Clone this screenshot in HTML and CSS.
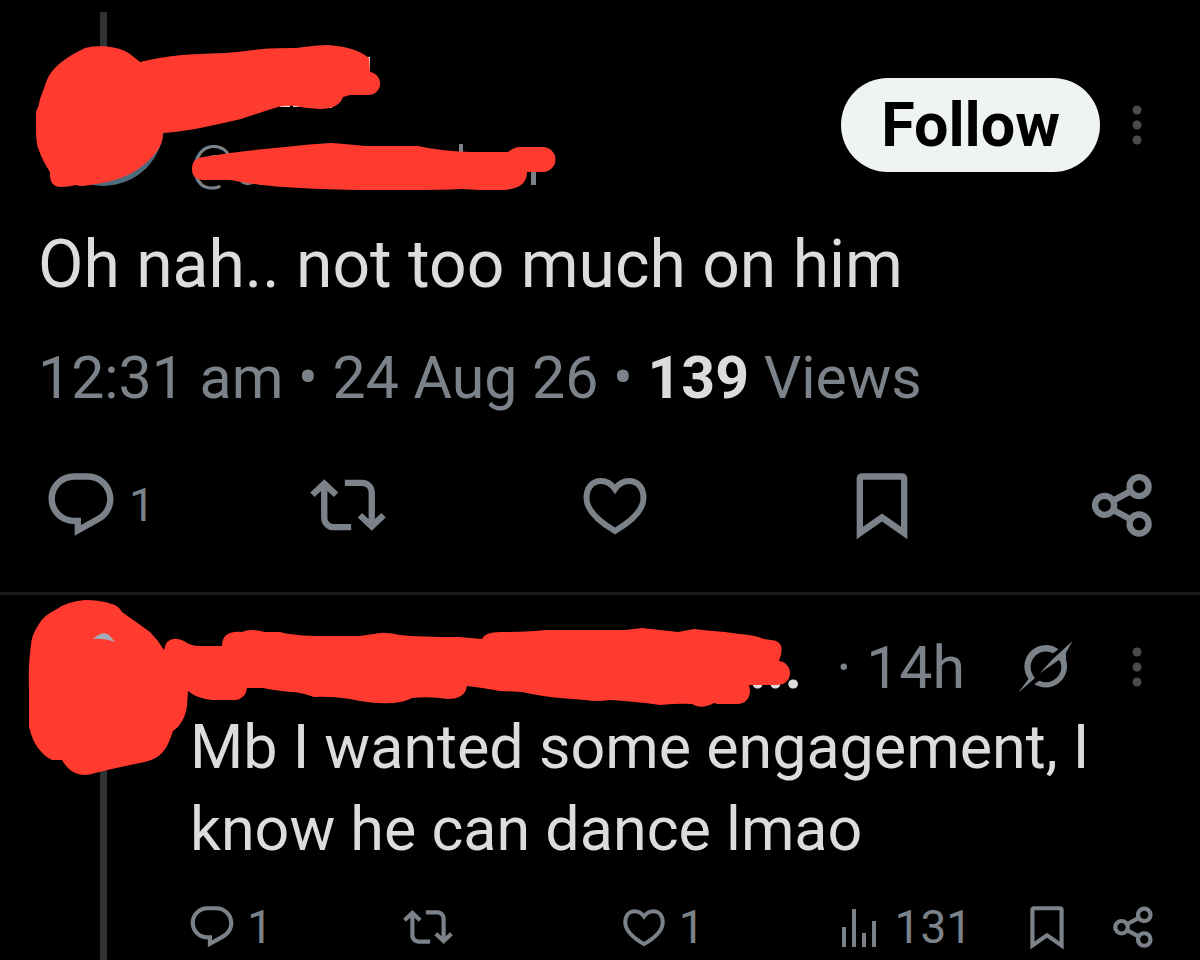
FILE: index.html
```html
<!DOCTYPE html>
<html lang="en">

<head>
    <meta charset="UTF-8">
    <meta name="viewport" content="width=device-width, initial-scale=1.0">
    <title>Post</title>
    <link rel="stylesheet" href="styles.css">
</head>

<body>

    <!-- shared icons -->
    <svg class="sprite" aria-hidden="true">
        <symbol id="reply" viewBox="0 0 24 24">
            <path d="M1.751 10c0-4.42 3.584-8 8.005-8h4.366c4.49 0 8.129 3.64 8.129 8.13 0 2.96-1.607 5.68-4.196 7.11l-8.054 4.46v-3.69h-.067c-4.49.1-8.183-3.51-8.183-8.01zm8.005-6c-3.317 0-6.005 2.69-6.005 6 0 3.37 2.77 6.08 6.138 6.01l.351-.01h1.761v2.3l5.087-2.81c1.951-1.08 3.163-3.13 3.163-5.36 0-3.39-2.744-6.13-6.129-6.13H9.756z"/>
        </symbol>
        <symbol id="repost" viewBox="0 0 24 24">
            <path d="M4.5 3.88l4.432 4.14-1.364 1.46L5.5 7.55V16c0 1.1.896 2 2 2H13v2H7.5c-2.209 0-4-1.79-4-4V7.55L1.432 9.48.068 8.02 4.5 3.88zM16.5 6H11V4h5.5c2.209 0 4 1.79 4 4v8.45l2.068-1.93 1.364 1.46-4.432 4.14-4.432-4.14 1.364-1.46 2.068 1.93V8c0-1.1-.896-2-2-2z"/>
        </symbol>
        <symbol id="like" viewBox="0 0 76 76">
            <path fill="none" stroke="currentColor" stroke-width="6" d="M38 22C33 15 28 14 24 14C15 14 9.500 21 9.500 31C9.500 43 21 54 38 64C55 54 66.500 43 66.500 31C66.500 21 61 14 52 14C48 14 43 15 38 22z"/>
        </symbol>
        <symbol id="bookmark" viewBox="0 0 24 24">
            <path d="M4 3.700C4 2.700 4.700 2 5.700 2h12.600C19.300 2 20 2.700 20 3.700v19.100l-8-5.600-8 5.600V3.700zM6 4v14.900l6-4.200 6 4.200V4H6z"/>
        </symbol>
        <symbol id="share" viewBox="0 0 24 24">
            <g fill="none" stroke="currentColor" stroke-width="2">
                <circle cx="17.400" cy="6.200" r="3"/>
                <circle cx="6.500" cy="12.100" r="3"/>
                <circle cx="17.400" cy="18" r="3"/>
                <path d="M9.100 10.700L14.800 7.600M9.100 13.500L14.800 16.600"/>
            </g>
        </symbol>
        <symbol id="views" viewBox="0 0 50 50">
            <path d="M7 25h4v20H7zM17 7h4v38h-4zM27 31h4v14h-4zM37 19h4v26h-4z"/>
        </symbol>
        <symbol id="more" viewBox="0 0 12 42">
            <circle cx="6" cy="6" r="4.500"/>
            <circle cx="6" cy="21" r="4.500"/>
            <circle cx="6" cy="36" r="4.500"/>
        </symbol>
        <symbol id="grok" viewBox="594 60 170 162">
            <path d="M718 88A64 64 0 0 0 628 177L597 218L647 175L645 170A46 46 0 0 1 702 100z"/>
            <path d="M760 63L700 118L662 160L719 120L724 126A46 46 0 0 1 661 182L645 192A64 64 0 0 0 741 120L740 100z"/>
        </symbol>
    </svg>

    <article class="post main">
        <div class="thread top"></div>
        <div class="head">
            <div class="avatar photo"></div>
            <div class="user">
                <span class="handle">@</span>
            </div>
            <button class="follow">Follow</button>
            <button class="more" aria-label="More"><svg><use href="#more"/></svg></button>
        </div>
        <p class="text">Oh nah.. not too much on him</p>
        <p class="meta">12:31 am • 24 Aug 26 • <b>139</b> Views</p>
        <div class="actions">
            <button aria-label="Reply"><svg><use href="#reply"/></svg><span>1</span></button>
            <button aria-label="Repost"><svg><use href="#repost"/></svg></button>
            <button aria-label="Like"><svg><use href="#like"/></svg></button>
            <button aria-label="Bookmark"><svg><use href="#bookmark"/></svg></button>
            <button aria-label="Share"><svg><use href="#share"/></svg></button>
        </div>
        <!-- marker over avatar, name and handle -->
        <svg class="marker" width="600" height="200" viewBox="0 0 600 200">
            <path class="bit" d="M459 144h4v10h-4zM531 170h5v15h-5zM240 182h16l-3 2q-6 2-10 0zM259 182h3v3h-3z"/>
            <path class="bit light" d="M280 105h10v2h-10zM293 105h9v2h-9zM329 104h3v4h-3zM367 57h3v14h-3z"/>
            <path d="M103 46Q92 46 85 48Q70 55 59 64Q50 72 47 80L40 99Q39 106 36 112V128Q36 142 38 148Q43 162 50 172Q49 187 61 187Q68 187 76 185Q80 187 90 185Q114 182 130 174Q148 164 157 151Q163 143 163 133Q178 132 195 129Q220 124 241 119Q262 112 278 107Q285 105 295 106Q308 109 320 109Q339 109 343 97L350 95H367A11 11 0 0 0 370 72L369 58Q356 47 328 45Q318 45 296 48Q275 48 262 49Q240 52 225 53Q195 54 182 55Q160 57 140 62L130 54Q120 47 103 46z"/>
            <path d="M203 157Q192 158 192 169Q192 180 204 180L230 180Q260 186 300 188Q340 190 375 190H410Q440 190 462 189L480 190H503Q527 189 527 172L543 172A12 12 0 0 0 543 147H520Q514 147 508 152H470Q440 151 418 146H365Q345 144 331 143Q310 144 285 147Q240 151 203 157z"/>
        </svg>
    </article>

    <article class="post reply">
        <div class="rail">
            <div class="avatar"></div>
            <div class="thread"></div>
        </div>
        <div class="content">
            <div class="head">
                <b class="name">...</b>
                <span class="time">· 14h</span>
                <button class="grok" aria-label="Explain this post"><svg><use href="#grok"/></svg></button>
                <button class="more" aria-label="More"><svg><use href="#more"/></svg></button>
            </div>
            <p class="text">Mb I wanted some engagement, I know he can dance lmao</p>
            <div class="actions">
                <button aria-label="Reply"><svg><use href="#reply"/></svg><span>1</span></button>
                <button aria-label="Repost"><svg><use href="#repost"/></svg></button>
                <button aria-label="Like"><svg><use href="#like"/></svg><span>1</span></button>
                <button aria-label="Views"><svg><use href="#views"/></svg><span>131</span></button>
                <button aria-label="Bookmark"><svg><use href="#bookmark"/></svg></button>
                <button aria-label="Share"><svg><use href="#share"/></svg></button>
            </div>
        </div>
        <!-- marker over avatar and name -->
        <svg class="marker" width="820" height="185" viewBox="0 595 820 185">
            <path d="M85 600Q66 602 57 609Q44 615 39 624Q31 636 31 645Q28 665 29 690V727Q33 742 38 748Q45 757 52 760L62 760Q68 770 75 773Q85 777 95 773Q115 768 135 764Q155 761 162 753Q168 747 173 731L178 727Q186 717 187 706L188 691Q198 699 212 700H236Q246 698 247 688H263Q272 690 290 692Q300 692 314 697Q330 696 350 699Q370 704 393 703Q405 702 412 698Q430 696 448 699Q465 699 467 686Q485 688 500 691L522 692Q545 697 560 698L585 700Q596 702 610 700Q640 702 660 705Q680 703 692 704Q701 710 714 703L718 704H739Q750 702 750 690L749 685H777A12 12 0 0 0 779 661Q787 641 771 640L764 639Q755 635 740 634L725 632Q710 631 694 629L678 632Q660 630 642 628L625 630H545Q532 632 500 632Q485 632 482 639L459 637Q420 637 400 635Q385 632 380 633L360 636H315Q290 635 280 632L265 632Q250 628 242 632Q222 630 222 646H200Q190 646 184 641Q167 634 164 650Q158 640 150 632L122 612Q119 606 112 604Q100 600 85 600z"/>
            <path class="glint" d="M93 639Q103 630 109 635L115 642Q103 638 93 639z"/>
        </svg>
    </article>

</body>

</html>
```
FILE: styles.css
```css
* {
    margin: 0;
    padding: 0;
    box-sizing: border-box;
}

body {
    min-height: 100vh;
    display: flex;
    flex-direction: column;
    background-color: #000;
    color: #dcdcdc;
    font-family: Roboto, "Liberation Sans", sans-serif;
    font-size: 61px;
}

button {
    border: none;
    background: none;
    color: inherit;
    font: inherit;
    cursor: pointer;
}

svg {
    display: block;
    fill: currentColor;
}

.sprite {
    position: absolute;
    width: 0;
    height: 0;
}

.post {
    position: relative;
}

.head {
    display: flex;
    align-items: center;
}

.avatar {
    width: 122px;
    height: 122px;
    border-radius: 50%;
    flex-shrink: 0;
}

.photo {
    margin-left: 4px;
    background-color: #4d6b7c;
}

.thread {
    width: 7px;
    background-color: #2f3336;
}

.more {
    width: 12px;
    height: 42px;
    color: #4b4b4e;
}

.more svg {
    width: 12px;
    height: 42px;
}

/* first post */
.main {
    padding: 12px 40px 49px 38px;
    border-bottom: 3px solid #1a1a1b;
}

.top {
    height: 52px;
    margin-left: 62px;
}

.user {
    flex: 1;
    align-self: flex-end;
    margin-left: 27px;
}

.handle {
    display: block;
    font-size: 48px;
    line-height: 46px;
    color: #7b8289;
}

.follow {
    height: 94px;
    padding: 0 40px;
    border-radius: 47px;
    background-color: #eff3f4;
    color: #000;
    font-weight: bold;
}

.main .more {
    margin: 0 17px 0 31px;
}

.main .text {
    margin-top: 39px;
    font-size: 66px;
    line-height: 80px;
}

.meta {
    margin-top: 33px;
    font-size: 59px;
    line-height: 80px;
    color: #7b8289;
}

.meta b {
    color: #dcdcdc;
}

.actions {
    display: grid;
    color: #7b8289;
    font-size: 46px;
}

.actions button {
    display: flex;
    align-items: center;
    gap: 10px;
}

.main .actions {
    grid-template-columns: 10fr 10fr 10fr 9fr 76px;
    margin-top: 49px;
    margin-left: 5px;
}

.main .actions svg {
    width: 76px;
    height: 76px;
}

/* second post */
.reply {
    flex: 1;
    display: flex;
    padding: 36px 40px 0;
}

.rail {
    display: flex;
    flex-direction: column;
    align-items: center;
    width: 127px;
    margin-right: 23px;
}

.rail .thread {
    flex: 1;
}

.content {
    flex: 1;
    padding-bottom: 7px;
}

.reply .head {
    height: 72px;
    justify-content: flex-end;
}

.name {
    margin-right: 34px;
}

.time,
.grok {
    color: #7b8289;
}

.time {
    font-size: 59px;
}

.grok {
    margin-left: 52px;
}

.grok svg {
    width: 57px;
    height: 54px;
}

.reply .more {
    margin: 0 17px 0 57px;
}

.reply .text {
    margin-top: 3px;
    line-height: 82px;
}

.reply .actions {
    grid-template-columns: 15fr 15fr 15fr 13fr 6fr 50px;
    margin: 30px 2px 0 -3px;
}

.reply .actions svg {
    width: 50px;
    height: 50px;
}

/* red marker strokes */
.marker {
    position: absolute;
    left: 0;
    top: 0;
    color: #ff3b30;
    pointer-events: none;
}

.marker .bit {
    fill: #7b8289;
}

.marker .light {
    fill: #dcdcdc;
}

.marker .glint {
    fill: #a3adb5;
}
```
